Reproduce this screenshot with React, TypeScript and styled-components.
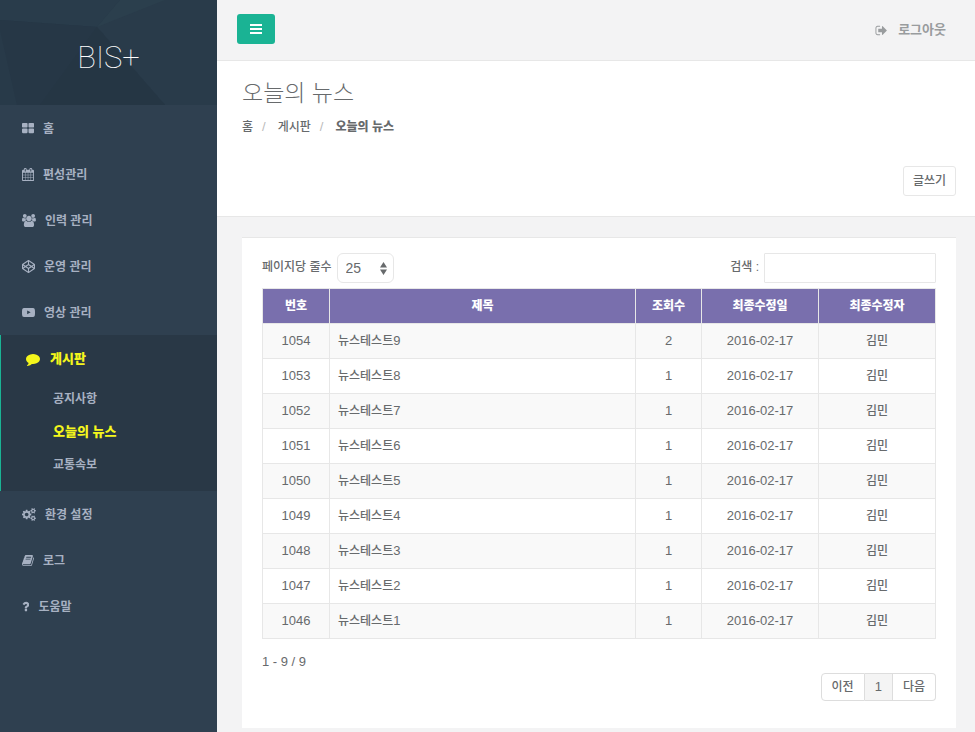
import React, { useState } from "react";
import styled, { createGlobalStyle, css } from "styled-components";

const color = {
  sidebar: "#2f4050",
  sidebarDark: "#293846",
  sidebarText: "#a7b1c2",
  highlight: "#f4f61c",
  accent: "#1ab394",
  canvas: "#f3f3f4",
  line: "#e7e7e7",
  text: "#676a6c",
  muted: "#999c9e",
  tableHead: "#796fad",
};

const GlobalStyle = createGlobalStyle`
  *, *::before, *::after { box-sizing: border-box; }
  body {
    margin: 0;
    background: ${color.sidebar};
    color: ${color.text};
    font-family: "Liberation Sans", "Noto Sans CJK KR", sans-serif;
    font-size: 12px;
    font-weight: 500;
    line-height: 18px;
  }
  button, input, select { font: inherit; color: inherit; }
  a { color: inherit; text-decoration: none; }
  ul, ol { list-style: none; margin: 0; padding: 0; }
`;

type Glyph = { x: number; w: number; d: string };

const glyphs: Record<string, Glyph> = {
  thLarge: {
    x: 64,
    w: 1664,
    d: "M832 1024v384q0 52-38 90t-90 38h-512q-52 0-90-38t-38-90v-384q0-52 38-90t90-38h512q52 0 90 38t38 90zm0-768v384q0 52-38 90t-90 38h-512q-52 0-90-38t-38-90v-384q0-52 38-90t90-38h512q52 0 90 38t38 90zm896 768v384q0 52-38 90t-90 38h-512q-52 0-90-38t-38-90v-384q0-52 38-90t90-38h512q52 0 90 38t38 90zm0-768v384q0 52-38 90t-90 38h-512q-52 0-90-38t-38-90v-384q0-52 38-90t90-38h512q52 0 90 38t38 90z",
  },
  calendar: {
    x: 64,
    w: 1664,
    d: "M192 1664h288v-288h-288v288zm352 0h320v-288h-320v288zm-352-352h288v-320h-288v320zm352 0h320v-320h-320v320zm-352-384h288v-288h-288v288zm736 736h320v-288h-320v288zm-384-736h320v-288h-320v288zm768 736h288v-288h-288v288zm-384-352h320v-320h-320v320zm-352-864v-288q0-13-9.500-22.500t-22.500-9.500h-64q-13 0-22.500 9.500t-9.500 22.500v288q0 13 9.500 22.500t22.500 9.500h64q13 0 22.500-9.500t9.500-22.500zm736 864h288v-320h-288v320zm-384-384h320v-288h-320v288zm384 0h288v-288h-288v288zm32-480v-288q0-13-9.500-22.500t-22.500-9.500h-64q-13 0-22.500 9.500t-9.500 22.500v288q0 13 9.500 22.500t22.500 9.500h64q13 0 22.500-9.500t9.500-22.500zm384-64v1280q0 52-38 90t-90 38h-1408q-52 0-90-38t-38-90v-1280q0-52 38-90t90-38h128v-96q0-66 47-113t113-47h64q66 0 113 47t47 113v96h384v-96q0-66 47-113t113-47h64q66 0 113 47t47 113v96h128q52 0 90 38t38 90z",
  },
  users: {
    x: -64,
    w: 1920,
    d: "M529 896q-162 5-265 128h-134q-82 0-138-40.500t-56-118.500q0-353 124-353 6 0 43.500 21t97.500 42.500 119 21.500q67 0 133-23-5 37-5 66 0 139 81 256zm1071 637q0 120-73 189.500t-194 69.500h-874q-121 0-194-69.500t-73-189.500q0-53 3.500-103.500t14-109 26.500-108.500 43-97.500 62-81 85.500-53.500 111.500-20q10 0 43 21.500t73 48 107 48 135 21.500 135-21.500 107-48 73-48 43-21.500q61 0 111.500 20t85.500 53.500 62 81 43 97.500 26.500 108.500 14 109 3.500 103.500zm-1024-1277q0 106-75 181t-181 75-181-75-75-181 75-181 181-75 181 75 75 181zm704 384q0 159-112.500 271.500t-271.500 112.500-271.500-112.500-112.500-271.500 112.500-271.500 271.500-112.500 271.500 112.500 112.500 271.500zm576 225q0 78-56 118.500t-138 40.500h-134q-103-123-265-128 81-117 81-256 0-29-5-66 66 23 133 23 59 0 119-21.500t97.500-42.500 43.500-21q124 0 124 353zm-128-609q0 106-75 181t-181 75-181-75-75-181 75-181 181-75 181 75 75 181z",
  },
  codepen: {
    x: 0,
    w: 1792,
    d: "M216 1169l603 402v-359l-334-223zm-62-144l193-129-193-129v258zm819 546l603-402-269-180-334 223v359zm-77-493l272-182-272-182-272 182zm-411-275l334-223v-359l-603 402zm960 93l193 129v-258zm-138-93l269-180-603-402v359zm485-180v546q0 41-34 64l-819 546q-21 13-43 13t-43-13l-819-546q-34-23-34-64v-546q0-41 34-64l819-546q21-13 43-13t43 13l819 546q34 23 34 64z",
  },
  video: {
    x: 0,
    w: 1792,
    d: "M711 1128l484-250-484-253v503zm185-862q168 0 324.500 4.500t229.500 9.500l73 4q1 0 17 1.500t23 3 23.500 4.500 28.500 8 28 13 31 19.500 29 26.500q6 6 15.500 18.500t29 58.500 26.500 101q8 64 12.500 136.500t5.500 113.500v176q1 145-18 290-7 55-25 99.500t-32 61.500l-14 17q-14 15-29 26.500t-31 19-28 12.500-28.500 8-24 4.500-23 3-16.500 1.500q-251 19-627 19-207-2-359.500-6.500t-200.500-7.500l-49-4-36-4q-36-5-54.500-10t-51-21-56.500-41q-6-6-15.500-18.500t-29-58.500-26.500-101q-8-64-12.500-136.500t-5.500-113.500v-176q-1-145 18-290 7-55 25-99.500t32-61.500l14-17q14-15 29-26.500t31-19.500 28-13 28.500-8 23.500-4.500 23-3 17-1.500q251-18 627-18z",
  },
  comment: {
    x: 0,
    w: 1792,
    d: "M1792 896q0 174-120 321.500t-326 233-450 85.500q-70 0-145-8-198 175-460 242-49 14-114 22-17 2-30.500-9t-17.500-29v-1q-3-4-.5-12t2-10 4.500-9.500l6-9 7-8.500 8-9q7-8 31-34.500t34.500-38 31-39.500 32.500-51 27-59 26-76q-157-89-247.500-220t-90.500-281q0-130 71-248.500t191-204.500 286-136.500 348-50.500q244 0 450 85.500t326 233 120 321.500z",
  },
  cogs: {
    x: -64,
    w: 1920,
    d: "M832 896q0-106-75-181t-181-75-181 75-75 181 75 181 181 75 181-75 75-181zm768 512q0-52-38-90t-90-38-90 38-38 90q0 53 37.500 90.500t90.500 37.500 90.500-37.500 37.500-90.500zm0-1024q0-52-38-90t-90-38-90 38-38 90q0 53 37.500 90.500t90.500 37.500 90.500-37.500 37.500-90.500zm-384 421v185q0 10-7 19.500t-16 10.500l-155 24q-11 35-32 76 34 48 90 115 7 11 7 20 0 12-7 19-23 30-82.500 89.500t-78.500 59.500q-11 0-21-7l-115-90q-37 19-77 31-11 108-23 155-7 24-30 24h-186q-11 0-20-7.500t-10-17.500l-23-153q-34-10-75-31l-118 89q-7 7-20 7-11 0-21-8-144-133-144-160 0-9 7-19 10-14 41-53t47-61q-23-44-35-82l-152-24q-10-1-17-9.500t-7-19.500v-185q0-10 7-19.500t16-10.500l155-24q11-35 32-76-34-48-90-115-7-11-7-20 0-12 7-20 22-30 82-89t79-59q11 0 21 7l115 90q34-18 77-32 11-108 23-154 7-24 30-24h186q11 0 20 7.500t10 17.500l23 153q34 10 75 31l118-89q8-7 20-7 11 0 21 8 144 133 144 160 0 8-7 19-12 16-42 54t-45 60q23 48 34 82l152 23q10 2 17 10.500t7 19.500zm640 533v140q0 16-149 31-12 27-30 52 51 113 51 138 0 4-4 7-122 71-124 71-8 0-46-47t-52-68q-20 2-30 2t-30-2q-14 21-52 68t-46 47q-2 0-124-71-4-3-4-7 0-25 51-138-18-25-30-52-149-15-149-31v-140q0-16 149-31 13-29 30-52-51-113-51-138 0-4 4-7 4-2 35-20t59-34 30-16q8 0 46 46.500t52 67.500q20-2 30-2t30 2q51-71 92-112l6-2q4 0 124 70 4 3 4 7 0 25-51 138 17 23 30 52 149 15 149 31zm0-1024v140q0 16-149 31-12 27-30 52 51 113 51 138 0 4-4 7-122 71-124 71-8 0-46-47t-52-68q-20 2-30 2t-30-2q-14 21-52 68t-46 47q-2 0-124-71-4-3-4-7 0-25 51-138-18-25-30-52-149-15-149-31v-140q0-16 149-31 13-29 30-52-51-113-51-138 0-4 4-7 4-2 35-20t59-34 30-16q8 0 46 46.500t52 67.500q20-2 30-2t30 2q51-71 92-112l6-2q4 0 124 70 4 3 4 7 0 25-51 138 17 23 30 52 149 15 149 31z",
  },
  book: {
    x: 64,
    w: 1664,
    d: "M1703 478q40 57 18 129l-275 906q-19 64-76.500 107.500t-122.500 43.500h-923q-77 0-148.500-53.500t-99.500-131.500q-24-67-2-127 0-4 3-27t4-37q1-8-3-21.500t-3-19.500q2-11 8-21t16.500-23.500 16.500-23.500q23-38 45-91.500t30-91.500q3-10 .5-30t-.5-28q3-11 17-28t17-23q21-36 42-92t25-90q1-9-2.500-32t.5-28q4-13 22-30.500t22-22.500q19-26 42.500-84.500t27.500-96.500q1-8-3-25.500t-2-26.500q2-8 9-18t18-23 17-21q8-12 16.500-30.500t15-35 16-36 19.500-32 26.500-23.500 36-11.500 47.500 5.500l-1 3q38-9 51-9h761q74 0 114 56t18 130l-274 906q-36 119-71.500 153.500t-128.500 34.500h-869q-27 0-38 15-11 16-1 43 24 70 144 70h923q29 0 56-15.500t35-41.500l300-987q7-22 5-57 38 15 59 43zm-1064 2q-4 13 2 22.500t20 9.500h608q13 0 25.500-9.500t16.500-22.500l21-64q4-13-2-22.500t-20-9.500h-608q-13 0-25.500 9.500t-16.500 22.500zm-83 256q-4 13 2 22.500t20 9.500h608q13 0 25.500-9.500t16.500-22.500l21-64q4-13-2-22.500t-20-9.500h-608q-13 0-25.500 9.500t-16.500 22.500z",
  },
  question: {
    x: 384,
    w: 1024,
    d: "M1088 1256v240q0 16-12 28t-28 12h-240q-16 0-28-12t-12-28v-240q0-16 12-28t28-12h240q16 0 28 12t12 28zm316-600q0 54-15.500 101t-35 76.500-55 59.500-57.500 43.500-61 35.500q-41 23-68.500 65t-27.500 67q0 17-12 32.500t-28 15.500h-240q-15 0-25.500-18.500t-10.500-37.500v-45q0-83 65-156.500t143-108.500q59-27 84-56t25-76q0-42-46.500-74t-107.500-32q-65 0-108 29-35 25-107 115-13 16-31 16-12 0-25-8l-164-125q-13-10-15.500-25t5.500-28q160-266 464-266 80 0 161 31t146 83 106 127.500 41 158.500z",
  },
  signOut: {
    x: 0,
    w: 1664,
    d: "M704 1440q0 4 1 20t.5 26.500-3 23.500-10 19.500-20.500 6.500h-320q-119 0-203.500-84.500t-84.500-203.500v-704q0-119 84.500-203.500t203.500-84.500h320q13 0 22.500 9.500t9.500 22.500q0 4 1 20t.5 26.500-3 23.500-10 19.500-20.500 6.500h-320q-66 0-113 47t-47 113v704q0 66 47 113t113 47h312l11.500 1 11.500 3 8 5.500 7 9 2 13.500zm928-544q0 26-19 45l-544 544q-19 19-45 19t-45-19-19-45v-288h-448q-26 0-45-19t-19-45v-384q0-26 19-45t45-19h448v-288q0-26 19-45t45-19 45 19l544 544q19 19 19 45z",
  },
  bars: {
    x: 128,
    w: 1536,
    d: "M128 256h1536v256h-1536zM128 768h1536v256h-1536zM128 1280h1536v256h-1536z",
  },
};

const Svg = styled.svg`
  display: block;
  flex: none;
  fill: currentColor;
`;

function Icon({ name, size = 13 }: { name: string; size?: number }) {
  const g = glyphs[name];
  return (
    <Svg
      viewBox={`${g.x} 0 ${g.w} 1792`}
      width={(g.w * size) / 1792}
      height={size}
      aria-hidden="true"
    >
      <path d={g.d} />
    </Svg>
  );
}

const Shell = styled.div`
  display: grid;
  grid-template-columns: 217px minmax(0, 1fr);
  min-height: 100vh;
`;

const Sidebar = styled.nav`
  background: ${color.sidebar};
  color: ${color.sidebarText};
  font-weight: 700;
`;

const Brand = styled.div`
  display: grid;
  height: 105px;
  overflow: hidden;
  background: #273847;
  > * { grid-area: 1 / 1; }
`;

const BrandArt = styled.svg`
  width: 100%;
  height: 100%;
`;

const BrandName = styled.a`
  z-index: 1;
  align-self: center;
  justify-self: center;
  padding-top: 10px;
  color: #fff;
  font-family: Roboto, Inter, sans-serif;
  font-size: 31px;
  font-weight: 100;
  line-height: 36px;
`;

const NavGroup = styled.li<{ $active?: boolean }>`
  ${(p) =>
    p.$active &&
    css`
      padding-bottom: 10px;
      border-left: 1px solid ${color.accent};
      background: ${color.sidebarDark};
    `}
`;

const NavLink = styled.a<{ $active?: boolean }>`
  display: flex;
  align-items: center;
  gap: 9px;
  height: 46px;
  padding: 1px 0 0 22px;
  ${(p) =>
    p.$active &&
    css`
      gap: 10px;
      height: 47px;
      padding-left: 25px;
      color: ${color.highlight};
      font-size: 13px;
      font-weight: 900;
    `}
`;

const SubLink = styled.a<{ $active?: boolean }>`
  display: flex;
  align-items: center;
  height: 33px;
  padding: 1px 0 0 52px;
  ${(p) =>
    p.$active &&
    css`
      color: ${color.highlight};
      font-size: 13px;
      font-weight: 900;
    `}
`;

const Page = styled.div`
  background: ${color.canvas};
`;

const TopBar = styled.header`
  display: flex;
  align-items: center;
  justify-content: space-between;
  height: 61px;
  padding: 0 29px 2px 20px;
  border-bottom: 1px solid ${color.line};
`;

const MenuButton = styled.button`
  display: grid;
  place-items: center;
  width: 38px;
  height: 30px;
  padding: 0;
  border: 0;
  border-radius: 3px;
  background: ${color.accent};
  color: #fff;
`;

const Logout = styled.a`
  display: flex;
  align-items: center;
  gap: 11px;
  padding-top: 2px;
  color: ${color.muted};
  font-size: 13px;
  font-weight: 700;
`;

const Heading = styled.section`
  display: flex;
  flex-direction: column;
  padding: 16px 19px 20px 25px;
  border-bottom: 1px solid ${color.line};
  background: #fff;
`;

const Title = styled.h1`
  margin: 0 0 9px;
  font-size: 23px;
  font-weight: 300;
  line-height: 32px;
`;

const Crumbs = styled.ol`
  display: flex;
  li + li::before {
    content: "/";
    padding: 0 12px 0 9px;
    color: #bbb;
    font-size: 13px;
    font-weight: 400;
  }
`;

const Crumb = styled.li<{ $current?: boolean }>`
  font-weight: ${(p) => (p.$current ? 900 : 500)};
`;

const WriteButton = styled.button`
  align-self: flex-end;
  height: 30px;
  margin-top: 30px;
  padding: 0 9px;
  border: 1px solid ${color.line};
  border-radius: 3px;
  background: #fff;
`;

const Panel = styled.main`
  margin: 20px 19px 0 25px;
  padding: 15px 20px 27px;
  border-top: 1px solid ${color.line};
  background: #fff;
`;

const Controls = styled.div`
  display: flex;
  justify-content: space-between;
  margin-bottom: 5px;
`;

const Field = styled.label`
  display: flex;
  align-items: center;
  gap: 5px;
`;

const FieldText = styled.span`
  padding-bottom: 3px;
`;

const SelectWrap = styled.span`
  display: grid;
  align-items: center;
  > * { grid-area: 1 / 1; }
`;

const Select = styled.select`
  appearance: none;
  width: 57px;
  height: 30px;
  padding: 0 8px;
  border: 1px solid ${color.line};
  border-radius: 6px;
  background: #fff;
  font-size: 14px;
`;

const SelectArrows = styled.svg`
  z-index: 1;
  justify-self: end;
  width: 7px;
  height: 13px;
  margin-right: 7px;
  fill: ${color.text};
  pointer-events: none;
`;

const SearchInput = styled.input`
  width: 172px;
  height: 30px;
  padding: 5px 10px;
  border: 1px solid ${color.line};
  border-radius: 1px;
  background: #fff;
`;

const Table = styled.table`
  width: 100%;
  border-collapse: collapse;
  table-layout: fixed;
  th, td {
    height: 35px;
    padding: 0 8px;
    border: 1px solid ${color.line};
    text-align: center;
  }
  th {
    background: ${color.tableHead};
    color: #fff;
    font-weight: 900;
  }
  tbody tr:nth-child(odd) { background: #f9f9f9; }
`;

const Col = styled.col<{ $w?: number }>`
  width: ${(p) => (p.$w ? `${p.$w}px` : "auto")};
`;

const NumberCell = styled.td`
  font-size: 13px;
`;

const SubjectCell = styled.td`
  && { text-align: left; }
`;

const Num = styled.span`
  font-size: 13px;
`;

const Info = styled.p`
  margin: 14px 0 2px;
  font-size: 13px;
`;

const Pager = styled.div`
  display: flex;
  justify-content: flex-end;
`;

const PageButton = styled.button<{ $current?: boolean }>`
  height: 28px;
  padding: 0 10px;
  border: 1px solid #ddd;
  background: ${(p) => (p.$current ? "#f4f4f4" : "#fff")};
  & + & { border-left: 0; }
  &:first-child { border-radius: 4px 0 0 4px; }
  &:last-child { border-radius: 0 4px 4px 0; }
`;

const rows = [9, 8, 7, 6, 5, 4, 3, 2, 1].map((n) => ({
  id: 1045 + n,
  title: "뉴스테스트",
  n,
  views: n === 9 ? 2 : 1,
  date: "2016-02-17",
  editor: "김민",
}));

const menuTop = [
  ["thLarge", "홈"],
  ["calendar", "편성관리"],
  ["users", "인력 관리"],
  ["codepen", "운영 관리"],
  ["video", "영상 관리"],
];

const menuBottom = [
  ["cogs", "환경 설정"],
  ["book", "로그"],
  ["question", "도움말"],
];

const boards = ["공지사항", "오늘의 뉴스", "교통속보"];

function NavItem({ icon, label }: { icon: string; label: string }) {
  return (
    <NavGroup>
      <NavLink href="#">
        <Icon name={icon} />
        {label}
      </NavLink>
    </NavGroup>
  );
}

export default function App() {
  const [query, setQuery] = useState("");
  const visible = rows.filter((r) => `${r.title}${r.n}`.includes(query));

  return (
    <>
      <GlobalStyle />
      <Shell>
        <Sidebar>
          <Brand>
            <BrandArt viewBox="0 0 217 105" preserveAspectRatio="none" aria-hidden="true">
              <path d="M0 0H120L97 27L0 20Z" fill="#293c4b" />
              <path d="M120 0H217V105H165L97 27Z" fill="#293b4a" />
              <path d="M120 0H165L97 27Z" fill="#2b3f4d" />
              <path d="M0 20L97 27L40 105H0Z" fill="#263746" />
              <path d="M0 30L17 105H0Z" fill="#283a49" />
              <path d="M97 27L165 105H40Z" fill="#253644" />
            </BrandArt>
            <BrandName href="#">BIS+</BrandName>
          </Brand>
          <ul>
            {menuTop.map(([icon, label]) => (
              <NavItem key={label} icon={icon} label={label} />
            ))}
            <NavGroup $active>
              <NavLink href="#" $active>
                <Icon name="comment" size={14} />
                게시판
              </NavLink>
              <ul>
                {boards.map((label, i) => (
                  <li key={label}>
                    <SubLink href="#" $active={i === 1}>
                      {label}
                    </SubLink>
                  </li>
                ))}
              </ul>
            </NavGroup>
            {menuBottom.map(([icon, label]) => (
              <NavItem key={label} icon={icon} label={label} />
            ))}
          </ul>
        </Sidebar>
        <Page>
          <TopBar>
            <MenuButton type="button" aria-label="메뉴">
              <Icon name="bars" size={14} />
            </MenuButton>
            <Logout href="#">
              <Icon name="signOut" />
              로그아웃
            </Logout>
          </TopBar>
          <Heading>
            <Title>오늘의 뉴스</Title>
            <Crumbs>
              <Crumb>
                <a href="#">홈</a>
              </Crumb>
              <Crumb>
                <a href="#">게시판</a>
              </Crumb>
              <Crumb $current>오늘의 뉴스</Crumb>
            </Crumbs>
            <WriteButton type="button">글쓰기</WriteButton>
          </Heading>
          <Panel>
            <Controls>
              <Field>
                <FieldText>페이지당 줄수</FieldText>
                <SelectWrap>
                  <Select defaultValue="25">
                    <option>10</option>
                    <option>25</option>
                    <option>50</option>
                  </Select>
                  <SelectArrows viewBox="0 0 7 13" aria-hidden="true">
                    <path d="M3.5 0L7 5.500H0ZM3.500 13L0 7.500H7Z" />
                  </SelectArrows>
                </SelectWrap>
              </Field>
              <Field>
                <FieldText>검색 :</FieldText>
                <SearchInput
                  type="search"
                  value={query}
                  onChange={(e) => setQuery(e.target.value)}
                />
              </Field>
            </Controls>
            <Table>
              <colgroup>
                <Col $w={67} />
                <Col />
                <Col $w={66} />
                <Col $w={117} />
                <Col $w={117} />
              </colgroup>
              <thead>
                <tr>
                  <th>번호</th>
                  <th>제목</th>
                  <th>조회수</th>
                  <th>최종수정일</th>
                  <th>최종수정자</th>
                </tr>
              </thead>
              <tbody>
                {visible.map((r) => (
                  <tr key={r.id}>
                    <NumberCell>{r.id}</NumberCell>
                    <SubjectCell>
                      {r.title}
                      <Num>{r.n}</Num>
                    </SubjectCell>
                    <NumberCell>{r.views}</NumberCell>
                    <NumberCell>{r.date}</NumberCell>
                    <td>{r.editor}</td>
                  </tr>
                ))}
              </tbody>
            </Table>
            <Info>1 - 9 / 9</Info>
            <Pager>
              <PageButton type="button">이전</PageButton>
              <PageButton type="button" $current>
                <Num>1</Num>
              </PageButton>
              <PageButton type="button">다음</PageButton>
            </Pager>
          </Panel>
        </Page>
      </Shell>
    </>
  );
}
